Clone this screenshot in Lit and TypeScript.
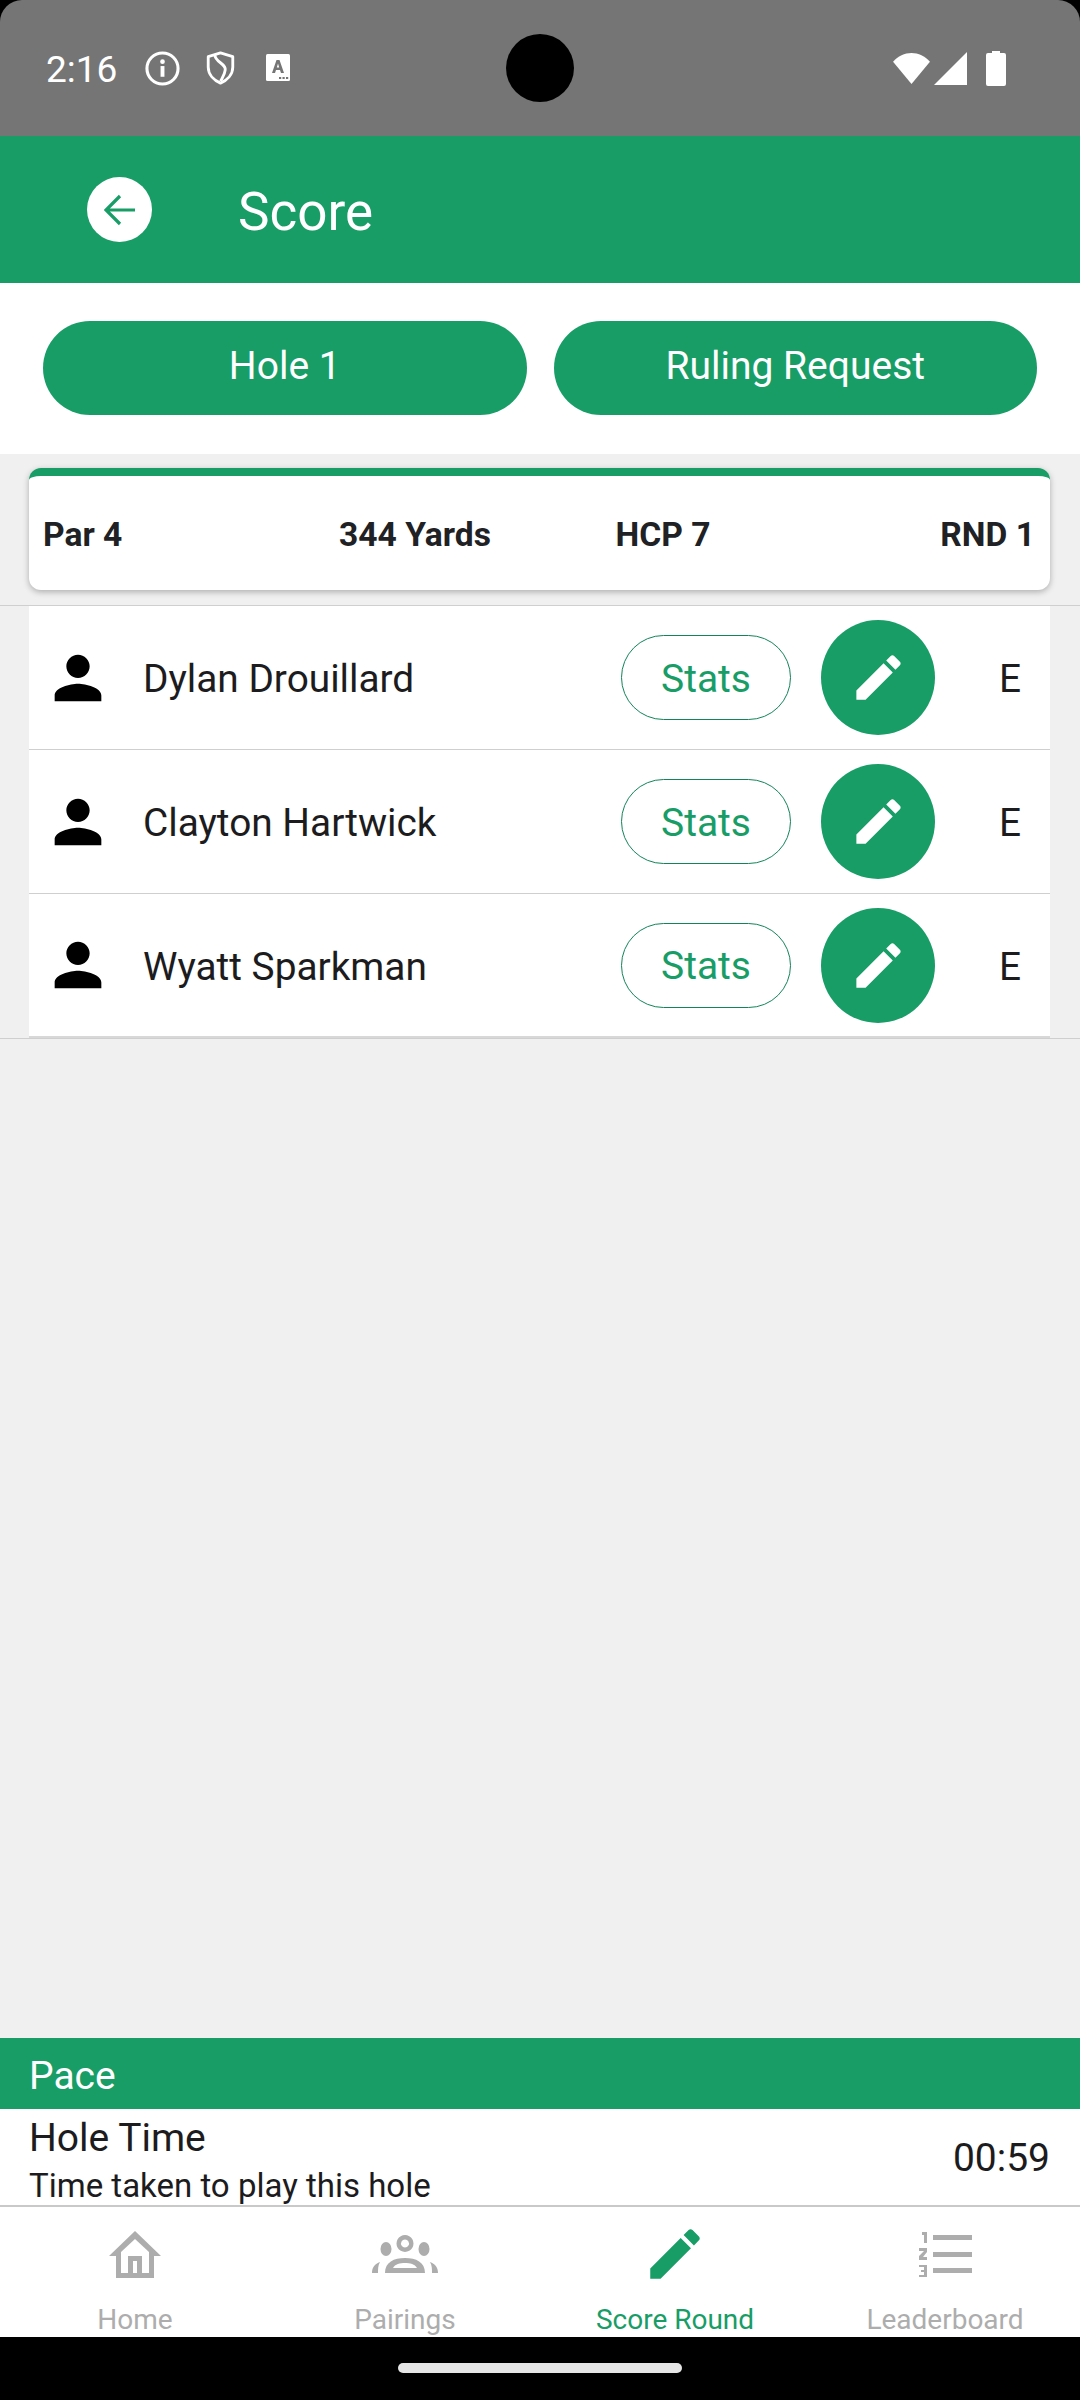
import { LitElement, html, css } from "lit";
import { customElement } from "lit/decorators.js";

const GREEN = "#189d67";
const pencil = "M3 17.25V21h3.75L17.81 9.94l-3.75-3.75L3 17.25zM20.71 7.04c.39-.39.39-1.02 0-1.41l-2.34-2.34c-.39-.39-1.02-.39-1.41 0l-1.83 1.83 3.75 3.75 1.83-1.83z";

@customElement("app-root")
export class AppRoot extends LitElement {
  static styles = css`
    :host { --g: #189d67; display: flex; flex-direction: column; width: 1080px; height: 2400px; background: #f0f0f0; font-family: Roboto, "Liberation Sans", sans-serif; color: #1c1c1e; overflow: hidden; }
    * { box-sizing: border-box; }
    svg { display: block; flex: none; }
    .status { height: 136px; flex: none; background: #000; }
    .status-in { height: 136px; background: #757575; border-radius: 22px 22px 0 0; display: flex; align-items: center; padding-left: 46px; position: relative; color: #fff; }
    .time { font-size: 37px; width: 99px; position: relative; top: 1px; }
    .st-left { display: flex; align-items: center; }
    .st-shield { margin-left: 26px; }
    .st-a { margin-left: 31px; }
    .camera { position: absolute; left: 506px; top: 34px; width: 68px; height: 68px; border-radius: 50%; background: #000; }
    .st-right { margin-left: auto; margin-right: 74px; display: flex; align-items: center; }
    .st-signal { margin-left: 3px; }
    .st-batt { margin-left: 19px; }
    .header { height: 147px; flex: none; background: var(--g); display: flex; align-items: center; color: #fff; padding-left: 87px; }
    .back { width: 65px; height: 65px; border-radius: 50%; background: #fff; display: flex; align-items: center; justify-content: center; }
    .title { font-size: 53px; margin-left: 86px; position: relative; top: 2px; }
    .actions { height: 171px; flex: none; background: #fff; display: flex; gap: 27px; padding: 38px 43px 0; }
    .btn { width: 484px; height: 94px; border-radius: 47px; background: var(--g); color: #fff; font-size: 39px; display: flex; align-items: center; justify-content: center; padding-bottom: 4px; }
    .info-wrap { height: 152px; flex: none; padding: 14px 30px 0 29px; border-bottom: 1px solid #cfcfcf; }
    .info { height: 122px; border-radius: 12px; background: #fff; border-top: 8px solid var(--g); box-shadow: 0 2px 6px rgba(0,0,0,.28); display: grid; grid-template-columns: repeat(4, 1fr); align-items: center; padding: 3px 15px 0 14px; font-size: 33.6px; font-weight: 700; color: #202124; text-align: center; }
    .info span:first-child { text-align: left; }
    .info span:last-child { text-align: right; }
    .rows { flex: none; border-bottom: 1px solid #cfcfcf; padding: 0 30px 0 29px; }
    .row { height: 144px; background: #fff; border-bottom: 1px solid #cfcfcf; display: flex; align-items: center; padding-left: 14px; }
    .row:last-child { border-bottom: 2px solid #d8d8d8; }
    .name { font-size: 38.8px; margin-left: 30px; flex: 1; position: relative; top: 1px; }
    .stats { width: 170px; height: 85px; border-radius: 43px; border: 1px solid #12845a; color: var(--g); font-size: 39px; display: flex; align-items: center; justify-content: center; padding-top: 2px; }
    .edit { width: 114px; height: 115px; border-radius: 50%; background: var(--g); margin-left: 30px; display: flex; align-items: center; justify-content: center; }
    .score { width: 115px; font-size: 38.8px; text-align: right; padding-right: 29px; position: relative; top: 1px; }
    .spacer { flex: 1; }
    .pace { height: 71px; flex: none; background: var(--g); color: #fff; font-size: 39px; display: flex; align-items: center; padding: 4px 0 0 29px; }
    .time-row { height: 98px; flex: none; background: #fff; border-bottom: 2px solid #c9c9c9; display: flex; justify-content: space-between; align-items: center; padding: 0 30px 0 29px; overflow: hidden; }
    .time-text { align-self: flex-start; padding-top: 7px; }
    .hole { font-size: 39px; line-height: 44px; }
    .desc { font-size: 33px; line-height: 40px; margin-top: 6px; white-space: nowrap; }
    .val { font-size: 39px; position: relative; top: 1px; }
    .nav { height: 130px; flex: none; background: #fff; display: grid; grid-template-columns: repeat(4, 1fr); }
    .tab { display: flex; flex-direction: column; align-items: center; color: #adadad; font-size: 28px; padding-top: 19px; overflow: hidden; }
    .tab.active { color: var(--g); }
    .ico { height: 56px; display: flex; align-items: center; }
    .tab-label { margin-top: 22px; line-height: 32px; }
    .gesture { height: 63px; flex: none; background: #000; display: flex; justify-content: center; padding-top: 26px; }
    .pill { width: 284px; height: 10px; border-radius: 5px; background: #e6e6e6; }
  `;

  private player(name: string) {
    return html`<div class="row">
      <svg width="70" height="70" viewBox="0 0 24 24" fill="#000"><path d="M12 12c2.21 0 4-1.79 4-4s-1.79-4-4-4-4 1.79-4 4 1.79 4 4 4zm0 2c-2.67 0-8 1.34-8 4v2h16v-2c0-2.66-5.33-4-8-4z"/></svg>
      <div class="name">${name}</div>
      <div class="stats">Stats</div>
      <div class="edit"><svg width="59" height="59" viewBox="0 0 24 24" fill="#fff"><path d=${pencil}/></svg></div>
      <div class="score">E</div>
    </div>`;
  }

  render() {
    return html`
      <div class="status"><div class="status-in">
        <div class="st-left">
          <div class="time">2:16</div>
          <svg width="35" height="35" viewBox="0 0 36 36"><circle cx="18" cy="18" r="16" fill="none" stroke="#fff" stroke-width="3.2"/><circle cx="18" cy="11" r="2.4" fill="#fff"/><rect x="16" y="15.5" width="4" height="11" fill="#fff"/></svg>
          <svg class="st-shield" width="29" height="34" viewBox="0 0 30 36"><path d="M15 2 L28 6 V17 C28 25 22 31 15 34 C8 31 2 25 2 17 V6 Z" fill="none" stroke="#fff" stroke-width="3" stroke-linejoin="round"/><path d="M9 4 C9 12 21 13 20 20 C19.6 25 17 28 15 32" fill="none" stroke="#fff" stroke-width="3"/></svg>
          <svg class="st-a" width="24" height="28" viewBox="0 0 24 28"><rect width="24" height="27" rx="1.5" fill="#fff"/><path fill-rule="evenodd" d="M6 19 L10.5 6 H13.5 L18 19 H15 L14 16 H10 L9 19 Z M10.8 13.5 H13.2 L12 9.5 Z" fill="#757575"/><rect x="13" y="23" width="2.2" height="2" fill="#757575"/><rect x="16.5" y="23" width="2.2" height="2" fill="#757575"/><rect x="20" y="23" width="2.2" height="2" fill="#757575"/></svg>
        </div>
        <div class="camera"></div>
        <div class="st-right">
          <svg width="39" height="33" viewBox="0 0 40 34"><path d="M20 33 L1 10 C6 4 13 1 20 1 C27 1 34 4 39 10 Z" fill="#fff"/></svg>
          <svg class="st-signal" width="33" height="33" viewBox="0 0 33 33"><path d="M33 0 V33 H0 Z" fill="#fff"/></svg>
          <svg class="st-batt" width="20" height="35" viewBox="0 0 20 35"><path d="M6 0 H14 V2 H18 Q20 2 20 4 V33 Q20 35 18 35 H2 Q0 35 0 33 V4 Q0 2 2 2 H6 Z" fill="#fff"/></svg>
        </div>
      </div></div>
      <div class="header">
        <div class="back"><svg width="32" height="32" viewBox="0 0 32 32" fill="none" stroke=${GREEN} stroke-width="3.2"><path d="M31 16 H2 M16 2 L2 16 L16 30"/></svg></div>
        <div class="title">Score</div>
      </div>
      <div class="actions"><div class="btn">Hole 1</div><div class="btn">Ruling Request</div></div>
      <div class="info-wrap"><div class="info"><span>Par 4</span><span>344 Yards</span><span>HCP 7</span><span>RND 1</span></div></div>
      <div class="rows">
        ${this.player("Dylan Drouillard")}
        ${this.player("Clayton Hartwick")}
        ${this.player("Wyatt Sparkman")}
      </div>
      <div class="spacer"></div>
      <div class="pace">Pace</div>
      <div class="time-row"><div class="time-text"><div class="hole">Hole Time</div><div class="desc">Time taken to play this hole</div></div><div class="val">00:59</div></div>
      <div class="nav">
        <div class="tab"><div class="ico"><svg width="52" height="47" viewBox="0 0 52 47" fill="#adadad"><path fill-rule="evenodd" d="M26 0 L52 25 H45 V47 H7 V25 H0 Z M12 21 V42 H19 V25 H33 V42 H40 V21 L26 8 Z M24 30 V42 H28 V30 Z"/></svg></div><div class="tab-label">Home</div></div>
        <div class="tab"><div class="ico"><svg width="66" height="38" viewBox="0 0 66 38" fill="#adadad"><path fill-rule="evenodd" d="M33 0 a8.5 8.5 0 1 1 -0.01 0 Z M33 4.5 a4 4 0 1 0 0.01 0 Z"/><ellipse cx="14" cy="14" rx="5.5" ry="7"/><ellipse cx="52" cy="14" rx="5.5" ry="7"/><path fill-rule="evenodd" d="M13 38 C13 27 22 23 33 23 C44 23 53 27 53 38 Z M21 33 H45 C43 29 38 28 33 28 C28 28 23 29 21 33 Z"/><path d="M0 38 C0 32 3 29 8 27 C6 30 6 34 6 38 Z M66 38 C66 32 63 29 58 27 C60 30 60 34 60 38 Z"/></svg></div><div class="tab-label">Pairings</div></div>
        <div class="tab active"><div class="ico"><svg width="66" height="66" viewBox="0 0 24 24" fill=${GREEN}><path d=${pencil}/></svg></div><div class="tab-label">Score Round</div></div>
        <div class="tab"><div class="ico"><svg width="53" height="45" viewBox="0 0 53 45" fill="#adadad"><rect x="14" y="3" width="39" height="5"/><rect x="14" y="20" width="39" height="5"/><rect x="14" y="36" width="39" height="5"/><path d="M3 0 H8 V11 H5 V3 H3 Z M0 16 H8 V20 L4 25 H8 V28 H0 V24 L5 19 H0 Z M0 33 H8 V45 H0 V43 H5 V40 H2 V38 H5 V35 H0 Z"/></svg></div><div class="tab-label">Leaderboard</div></div>
      </div>
      <div class="gesture"><div class="pill"></div></div>
    `;
  }
}
